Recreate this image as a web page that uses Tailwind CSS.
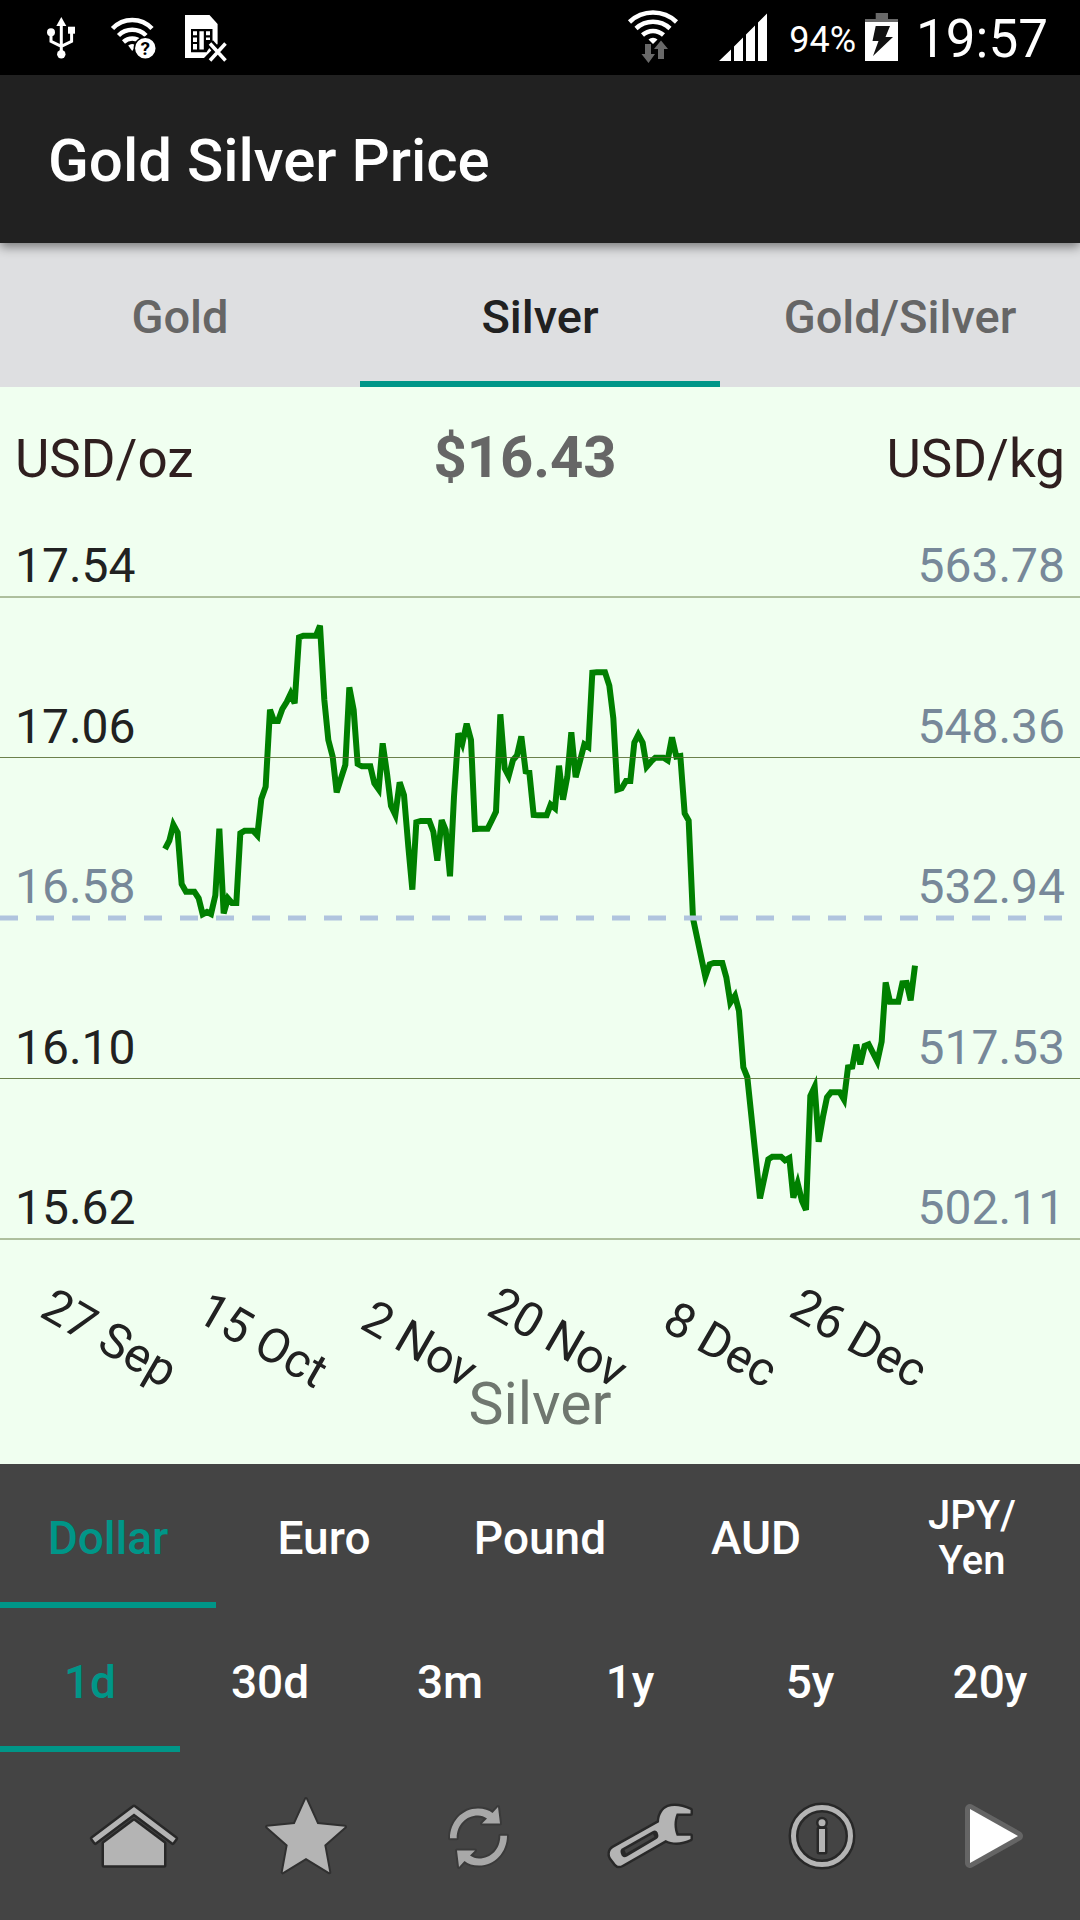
<!DOCTYPE html>
<html lang="en">
<head>
  <meta charset="UTF-8">
  <meta name="viewport" content="width=device-width, initial-scale=1.0">
  <title>Gold Silver Price</title>
  <script src="https://cdn.jsdelivr.net/npm/@tailwindcss/browser@4"></script>
</head>
<body class="min-h-screen bg-[#444444] font-['Roboto',sans-serif]">

  <!-- Status bar -->
  <div class="flex h-[75px] items-center justify-between bg-black pl-[46px] pr-8 text-white">
    <div class="flex items-center">
      <svg class="mr-8 h-11 w-8" viewBox="0 0 32 44" fill="#fff" aria-hidden="true">
        <path d="M15.3 1l5 9h-10z"/>
        <circle cx="15.3" cy="38.3" r="4.2"/>
        <circle cx="5" cy="16.3" r="4"/>
        <rect x="22" y="10.7" width="7" height="7"/>
        <path d="M15.3 9v28M5 17v8.300l10.300 5M25.600 17v8.300l-10.300 5" fill="none" stroke="#fff" stroke-width="3"/>
      </svg>
      <svg class="mr-[26px] h-11 w-12" viewBox="0 0 48 44" aria-hidden="true">
        <g fill="none" stroke="#fff" stroke-width="4.500">
          <path d="M2.500 12.500a27 27 0 0 1 39.500 0"/>
          <path d="M8.500 19.500a19.500 19.500 0 0 1 27.500 0"/>
          <path d="M13.500 26a13 13 0 0 1 17.500 0"/>
        </g>
        <path d="M22.200 35l-4-5.500a6 6 0 0 1 8 0z" fill="#fff"/>
        <circle cx="35.300" cy="32.300" r="11" fill="#fff" stroke="#000" stroke-width="1.500"/>
        <text x="35.300" y="39" text-anchor="middle" font-size="19" font-weight="700" fill="#000">?</text>
      </svg>
      <svg class="h-12 w-11" viewBox="0 0 44 48" aria-hidden="true">
        <path d="M1 1h24.500l8.100 9v20L20 44H1z" fill="#fff"/>
        <path d="M7 15h21.500v14l-6 9.300H7z" fill="#000"/>
        <path d="M9 17.300h4v4H9zM9 23.500h4V28H9zM9 30h4v5.500H9zM15.400 17.300h4.400v18.200h-4.400zM22 17.300h4v4h-4zM22 23.500h4V26h-4z" fill="#fff"/>
        <g fill="none">
          <path d="M26 29l15.500 17M41.500 29L26 46" stroke="#000" stroke-width="8"/>
          <path d="M26 29.500l15.500 17M41.500 29.500L26 46.500" stroke="#fff" stroke-width="3.500"/>
        </g>
      </svg>
    </div>
    <div class="flex items-center">
      <svg class="mr-10 h-[60px] w-[52px]" viewBox="0 0 52 60" aria-hidden="true">
        <g fill="none" stroke="#fff" stroke-width="4.500">
          <path d="M2.500 14a34 34 0 0 1 47 0"/>
          <path d="M9 20.500a25 25 0 0 1 34 0"/>
          <path d="M15.500 27a15.500 15.500 0 0 1 21 0"/>
        </g>
        <path d="M26 36l-4.500-4.500a6.500 6.500 0 0 1 9 0z" fill="#fff"/>
        <path d="M18 36h6v10h4l-6.500 9-7-9H18zM34 32.500l7 8.500h-4v10h-6V41h-4z" fill="#696969"/>
      </svg>
      <svg class="mr-[22px] h-[50px] w-12" viewBox="0 0 48 50" fill="#fff" aria-hidden="true">
        <path d="M0 48l12-11.500V48zM15 33.500l9-9V48h-9zM27 21.500l9-9V48h-9zM39 9.500l9-9V48h-9z"/>
      </svg>
      <span class="mr-2 pt-1 text-[36px] leading-none">94%</span>
      <svg class="mr-4 h-[50px] w-9" viewBox="0 0 36 50" aria-hidden="true">
        <path d="M11.700 0H24v6h10v3H1V6h10.700z" fill="#696969"/>
        <rect x="1" y="9" width="33" height="39" fill="#fff"/>
        <path d="M11.700 13H26l-4.500 11H29L9 43l5.500-15h-6z" fill="#111"/>
      </svg>
      <span class="pt-1 text-[53px] leading-none">19:57</span>
    </div>
  </div>

  <header class="relative z-10 flex h-42 items-center bg-[#212121] px-12 pt-1 shadow-[0_4px_10px_rgba(0,0,0,0.45)]">
    <h1 class="text-[60px] leading-none font-medium text-white">Gold Silver Price</h1>
  </header>

  <nav class="grid h-36 grid-cols-3 bg-[#dedfe1] text-[47px] font-medium text-[#666666]">
    <button type="button" class="pt-1">Gold</button>
    <button type="button" class="pt-1 text-[#212121] shadow-[inset_0_-6px_#009688]">Silver</button>
    <button type="button" class="pt-1">Gold/Silver</button>
  </nav>

  <main class="bg-[#f0fff0]">
    <div class="flex h-36 items-center justify-between px-[15px] text-[53px] leading-none text-[#2f1f1f]">
      <span>USD/oz</span>
      <strong class="pr-[30px] pb-1 text-[58px] font-bold text-[#666666]">$16.43</strong>
      <span>USD/kg</span>
    </div>

    <svg class="block h-auto w-full" viewBox="0 0 1080 933" role="img" aria-label="Silver price chart">
      <!-- price series -->
      <polyline transform="translate(150 69) scale(0.33333)" fill="none" stroke="#008000" stroke-width="18" points="
        45,747 58,722 70,674 83,698 95,852 108,875 133,875 146,895 158,943 171,936 183,942 196,886 208,686 221,940
        234,895 246,909 259,909 271,700 284,692 309,692 322,706 334,597 347,560 360,329 372,363 384,363 397,327
        410,306 422,281 434,310 447,112 460,107 498,107 510,77 523,300 535,420 548,470 560,577 573,535 586,495
        598,262 611,330 623,492 636,499 661,499 673,550 686,568 698,430 711,520 723,618 736,645 749,547 762,585
        775,740 787,869 799,667 812,663 838,663 850,695 862,782 875,660 887,690 900,829 912,590 925,400 937,430
        950,371 963,420 975,687 988,686 1013,686 1026,660 1038,635 1051,343 1064,505 1076,528 1089,480 1101,466
        1114,409 1127,514 1138,517 1151,645 1164,646 1190,646 1202,614 1215,625 1227,497 1239,599 1252,530
        1264,397 1277,532 1290,483 1303,433 1315,441 1327,218 1340,217 1365,217 1378,257 1390,355 1402,569
        1415,565 1428,543 1441,543 1453,428 1465,404 1478,428 1490,500 1503,485 1516,473 1541,473 1553,481
        1566,412 1579,470 1591,468 1604,640 1616,662 1629,955 1666,1130 1679,1093 1691,1089 1717,1089 1729,1132
        1741,1208 1755,1187 1767,1233 1780,1402 1792,1432 1830,1795 1855,1678 1867,1670 1893,1670 1905,1681
        1918,1674 1930,1793 1943,1750 1956,1803 1968,1830 1981,1488 1994,1460 2006,1625 2019,1550 2031,1492
        2043,1477 2069,1477 2082,1499 2094,1402 2107,1400 2119,1334 2131,1393 2144,1338 2156,1333 2182,1384
        2195,1325 2207,1147 2220,1205 2245,1205 2257,1150 2270,1149 2282,1201 2295,1097"/>

      <!-- grid lines -->
      <g stroke="#556b2f" stroke-opacity="0.85">
        <path d="M0 66h1080"/>
        <path d="M0 226.500h1080"/>
        <path d="M0 547.500h1080"/>
        <path d="M0 708h1080"/>
      </g>
      <path d="M0 387h1080" stroke="#b0c4de" stroke-width="5" stroke-dasharray="18 18"/>

      <!-- axis labels -->
      <g font-size="48" fill="#212121">
        <text x="15" y="51">17.54</text>
        <text x="15" y="212">17.06</text>
        <text x="15" y="372" fill="#778899">16.58</text>
        <text x="15" y="533">16.10</text>
        <text x="15" y="693">15.62</text>
      </g>
      <g font-size="48" fill="#778899" text-anchor="end">
        <text x="1065" y="51">563.78</text>
        <text x="1065" y="212">548.36</text>
        <text x="1065" y="372">532.94</text>
        <text x="1065" y="533">517.53</text>
        <text x="1065" y="693">502.11</text>
      </g>
      <g font-size="48" fill="#212121" text-anchor="end">
        <text transform="translate(165 858) rotate(30)">27 Sep</text>
        <text transform="translate(315 858) rotate(30)">15 Oct</text>
        <text transform="translate(465 858) rotate(30)">2 Nov</text>
        <text transform="translate(615 858) rotate(30)">20 Nov</text>
        <text transform="translate(765 858) rotate(30)">8 Dec</text>
        <text transform="translate(915 858) rotate(30)">26 Dec</text>
      </g>
      <text x="540" y="893" font-size="59" fill="#6f776f" text-anchor="middle">Silver</text>
    </svg>
  </main>

  <!-- Currency and period pickers -->
  <div class="grid h-36 grid-cols-5 text-[46px] font-medium text-white">
    <button type="button" class="pt-1 text-[#009688] shadow-[inset_0_-6px_#009688]">Dollar</button>
    <button type="button" class="pt-1">Euro</button>
    <button type="button" class="pt-1">Pound</button>
    <button type="button" class="pt-1">AUD</button>
    <button type="button" class="pt-1 text-[40px] leading-[45px]">JPY/<br>Yen</button>
  </div>
  <div class="grid h-36 grid-cols-6 text-[46px] font-medium text-white">
    <button type="button" class="pt-1 text-[#009688] shadow-[inset_0_-6px_#009688]">1d</button>
    <button type="button" class="pt-1">30d</button>
    <button type="button" class="pt-1">3m</button>
    <button type="button" class="pt-1">1y</button>
    <button type="button" class="pt-1">5y</button>
    <button type="button" class="pt-1">20y</button>
  </div>

  <!-- Toolbar -->
  <div class="grid h-42 grid-cols-6 pl-12">
    <button type="button" aria-label="Home" class="flex items-center justify-center">
      <svg class="size-24" viewBox="0 0 96 96" stroke-linejoin="round">
        <path d="M18 55.300L48 32.700l30 22.600v22H18z" fill="#b4b4b4" stroke="#282828" stroke-width="5" paint-order="stroke"/>
        <path d="M6.300 50.500L48 19l41.700 31.500-3 4L48 25.500 9.300 54.500z" fill="#b4b4b4" stroke="#282828" stroke-width="5" paint-order="stroke"/>
      </svg>
    </button>
    <button type="button" aria-label="Favourites" class="flex items-center justify-center">
      <svg class="size-24" viewBox="0 0 96 96">
        <path d="M48 11l11.300 25 27.700 2.700L66.300 57l5 27.300L48 70 24.700 84.300l5-27.300L9 38.700 36.700 36z" fill="#b4b4b4" stroke="#303030" stroke-width="4" stroke-linejoin="round" paint-order="stroke"/>
      </svg>
    </button>
    <button type="button" aria-label="Refresh" class="flex items-center justify-center">
      <svg class="size-24" viewBox="0 0 96 96">
        <defs>
          <g id="arrow">
            <path d="M20 50.300C20 34 32 20.500 48 20.500c6 0 11 1.500 14.500 4.500l5.500-6 2 16.500H52l5-5c-3-2-5.500-3-9-3-12 0-21.300 9.500-21.300 22.800z"/>
          </g>
        </defs>
        <g fill="#a8a8a8" stroke="#3a3a3a" stroke-width="4" stroke-linejoin="round" paint-order="stroke">
          <use href="#arrow"/>
          <use href="#arrow" transform="rotate(180 48.500 49)"/>
        </g>
      </svg>
    </button>
    <button type="button" aria-label="Settings" class="flex items-center justify-center">
      <svg class="size-24" viewBox="0 0 96 96" stroke="#282828" stroke-width="5" stroke-linejoin="round" paint-order="stroke">
        <path d="M88.500 22v3.500H74.700c-3 7-3 15 0 22.200h13.800V51c-8.500 4-17 5-24.800 1L20.600 76.700c-3 1.800-5 1.500-7-.7L9 70c-2-3.500-1.500-8 2.500-10.300L57 34.300c.3-8 4-13.300 9-15.300 6-2 14-1 22.500 3z" fill="#b4b4b4"/>
        <path d="M20 60.500l30.500-17.300c3-1.500 4.500 0 5.500 2.500.8 2.300.5 4-1.500 5.300L25 68.500c-3 1.500-5 .5-6-2.500-.8-2.500-.8-4.300 1-5.500z" fill="#282828" stroke="none"/>
        <path d="M22.500 62L51 46l1.500 3L24 65.500z" fill="#444444" stroke="none"/>
      </svg>
    </button>
    <button type="button" aria-label="Info" class="flex items-center justify-center">
      <svg class="size-24" viewBox="0 0 96 96">
        <circle cx="48" cy="48" r="28.500" fill="none" stroke="#282828" stroke-width="10"/>
        <circle cx="48" cy="48" r="28.500" fill="none" stroke="#b4b4b4" stroke-width="5"/>
        <g fill="#b4b4b4" stroke="#282828" stroke-width="5" stroke-linejoin="round" paint-order="stroke">
          <circle cx="48" cy="34.700" r="3.500"/>
          <rect x="45" y="41" width="6" height="23"/>
        </g>
      </svg>
    </button>
    <button type="button" aria-label="Play" class="flex items-center justify-center">
      <svg class="size-24" viewBox="0 0 96 96">
        <path d="M24 21l48 27-48 27z" fill="#fff" stroke="#656565" stroke-width="10" stroke-linejoin="round" paint-order="stroke"/>
      </svg>
    </button>
  </div>
</body>
</html>
